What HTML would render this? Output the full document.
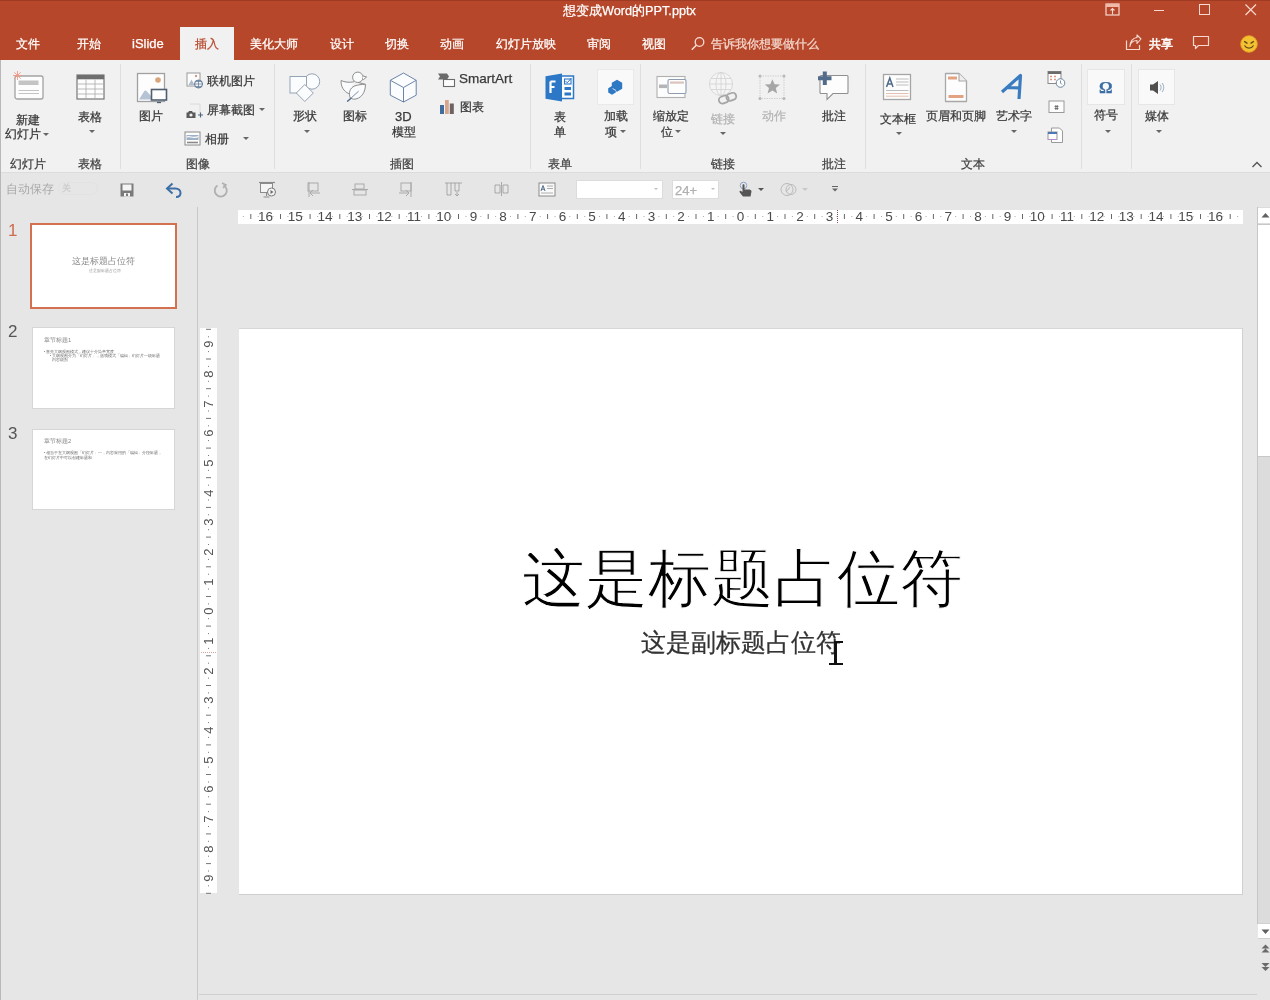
<!DOCTYPE html>
<html><head><meta charset="utf-8">
<style>
*{margin:0;padding:0;box-sizing:border-box}
html,body{width:1270px;height:1000px;overflow:hidden;background:#e6e6e6;font-family:"Liberation Sans",sans-serif;color:#3a3a3a}
body{will-change:transform}
.a{position:absolute}
.t{position:absolute;white-space:nowrap;font-size:12px;line-height:12px;-webkit-text-stroke:0.25px currentColor}
.w{color:#fff}
.dd{position:absolute;width:0;height:0;border-left:3px solid transparent;border-right:3px solid transparent;border-top:3px solid #666}
.sep{position:absolute;top:64px;width:1px;height:105px;background:#dedede}
.gl{position:absolute;white-space:nowrap;font-size:12px;line-height:12px;top:158px;color:#444;-webkit-text-stroke:0.25px currentColor}
svg{position:absolute;overflow:visible}
.rn{position:absolute;top:209.5px;width:30px;text-align:center;font-size:13.5px;line-height:14px;color:#4a4a4a}
.vn{position:absolute;left:194px;width:30px;height:14px;text-align:center;font-size:13px;line-height:14px;color:#555;transform:rotate(-90deg)}
</style></head><body>
<!-- title bar + tabs -->
<div class="a" style="left:0;top:0;width:1270px;height:60px;background:#b7472a"></div>
<div class="t w" style="left:563px;top:5px;font-size:12.7px;line-height:13px">想变成Word的PPT.pptx</div>
<!-- selected tab -->
<div class="a" style="left:180px;top:27px;width:54px;height:34px;background:#f1f1f1"></div>
<div class="t w" style="left:16px;top:38px">文件</div>
<div class="t w" style="left:77px;top:38px">开始</div>
<div class="t w" style="left:132px;top:37px;font-size:13px;line-height:13px">iSlide</div>
<div class="t" style="left:195px;top:38px;color:#b7472a">插入</div>
<div class="t w" style="left:250px;top:38px">美化大师</div>
<div class="t w" style="left:330px;top:38px">设计</div>
<div class="t w" style="left:385px;top:38px">切换</div>
<div class="t w" style="left:440px;top:38px">动画</div>
<div class="t w" style="left:496px;top:38px">幻灯片放映</div>
<div class="t w" style="left:587px;top:38px">审阅</div>
<div class="t w" style="left:642px;top:38px">视图</div>
<div class="t" style="left:711px;top:38px;color:#f3d6cd">告诉我你想要做什么</div>
<div class="t w" style="left:1149px;top:38px;-webkit-text-stroke:0.5px #fff">共享</div>


<!-- titlebar icons -->
<div class="a" style="left:0;top:0;width:1270px;height:1px;background:#9e3b22"></div>
<svg style="left:1105px;top:3px" width="16" height="13" viewBox="0 0 16 13">
 <rect x="1" y="1" width="13" height="11" fill="none" stroke="#f7d9cf" stroke-width="1.2"/>
 <rect x="1" y="1" width="13" height="3" fill="#f1b9a6"/>
 <path d="M7.5 11.5V5.5M5.5 7.5l2-2 2 2" fill="none" stroke="#f7d9cf" stroke-width="1.1"/>
</svg>
<div class="a" style="left:1154px;top:10px;width:10px;height:1px;background:#f7d9cf"></div>
<div class="a" style="left:1199px;top:4px;width:11px;height:11px;border:1.2px solid #f7d9cf"></div>
<svg style="left:1244px;top:3px" width="13" height="13" viewBox="0 0 13 13"><path d="M1.5 1.5l10.5 10.5M12 1.5L1.5 12" stroke="#f7d9cf" stroke-width="1.2"/></svg>
<!-- search -->
<svg style="left:690px;top:36px" width="16" height="16" viewBox="0 0 16 16"><circle cx="9.5" cy="6" r="4.3" fill="none" stroke="#f7ded6" stroke-width="1.3"/><path d="M6.5 9L1.8 13.8" stroke="#f7ded6" stroke-width="1.5"/></svg>
<!-- share -->
<svg style="left:1125px;top:34px" width="18" height="17" viewBox="0 0 18 17">
 <path d="M1.5 6.5V15.5H14.5V11" fill="none" stroke="#f7d9cf" stroke-width="1.2"/>
 <path d="M5 12.5C5.5 8.5 8.5 6.5 12 6.5V9.5L16 5L12 1V3.5C7.5 3.8 5 8 5 12.5Z" fill="none" stroke="#f7d9cf" stroke-width="1.1" stroke-linejoin="round"/>
</svg>
<!-- comment -->
<svg style="left:1192px;top:35px" width="18" height="15" viewBox="0 0 18 15">
 <path d="M1.5 1.5H16.5V10.5H6.5L3.5 13.5V10.5H1.5Z" fill="none" stroke="#f7d9cf" stroke-width="1.2" stroke-linejoin="round"/>
</svg>
<!-- smiley -->
<svg style="left:1240px;top:35px" width="18" height="18" viewBox="0 0 18 18">
 <circle cx="9" cy="9" r="8.3" fill="#f3c233" stroke="#e7a52a" stroke-width="0.8"/>
 <path d="M4.6 6.6L7 8.2M13.4 6.6L11 8.2" stroke="#6b4a1a" stroke-width="1.4" stroke-linecap="round"/>
 <path d="M4.8 10.8C6.3 13.8 11.7 13.8 13.2 10.8" fill="none" stroke="#6b4a1a" stroke-width="1.2" stroke-linecap="round"/>
</svg>

<!-- ribbon -->
<div class="a" style="left:0;top:60px;width:1270px;height:112px;background:#f1f1f1"></div>
<!-- QAT row -->
<div class="a" style="left:0;top:172px;width:1270px;height:34px;background:#e6e6e6;border-top:1px solid #dcdcdc"></div>

<!-- QAT -->
<div class="t" style="left:6px;top:183px;color:#aaaaaa;-webkit-text-stroke:0">自动保存</div>
<div class="a" style="left:58px;top:182px;width:40px;height:13px;border:1px solid #e2e2e2;border-radius:7px"></div>
<div class="t" style="left:62px;top:184px;font-size:9px;line-height:9px;color:#cccccc">关</div>
<svg style="left:119px;top:182px" width="16" height="16" viewBox="0 0 16 16">
 <path d="M1.5 1.5H14.5V14.5H1.5Z" fill="#7a7a7a"/>
 <rect x="3.5" y="2.5" width="9" height="6" fill="#f4f4f4"/>
 <rect x="5" y="11" width="6" height="3.5" fill="#f4f4f4"/>
 <rect x="7" y="11.5" width="2" height="2.5" fill="#7a7a7a"/>
</svg>
<svg style="left:165px;top:182px" width="18" height="16" viewBox="0 0 18 16">
 <path d="M3 6.5H10.5C13.5 6.5 15.5 8.5 15.5 11C15.5 13.5 13.5 15 11 15" fill="none" stroke="#3d6fa6" stroke-width="2"/>
 <path d="M7.5 1.5L2 6.5L7.5 11.5" fill="none" stroke="#3d6fa6" stroke-width="2"/>
</svg>
<svg style="left:213px;top:182px" width="16" height="16" viewBox="0 0 16 16">
 <path d="M10.5 3.2A6 6 0 1 1 4.5 3.5" fill="none" stroke="#b0b0b0" stroke-width="1.8"/>
 <path d="M9 1L13 3L10 6" fill="none" stroke="#b0b0b0" stroke-width="1.5"/>
</svg>
<svg style="left:258px;top:181px" width="19" height="18" viewBox="0 0 19 18">
 <path d="M1 1.5H17" stroke="#8a8a8a" stroke-width="1.2"/>
 <rect x="2.5" y="2.5" width="12" height="9" fill="#f4f4f4" stroke="#8a8a8a" stroke-width="1"/>
 <path d="M8.5 11.5V15M5.5 16H11.5" stroke="#8a8a8a" stroke-width="1"/>
 <circle cx="13.5" cy="11" r="4" fill="#f4f4f4" stroke="#7a7a7a" stroke-width="1"/>
 <path d="M12.5 9V13L15.5 11Z" fill="#6a6a6a"/>
</svg>
<svg style="left:306px;top:181px" width="16" height="17" viewBox="0 0 16 17" opacity="0.8">
 <rect x="2" y="2" width="10" height="8" fill="none" stroke="#9a9a9a"/>
 <path d="M14 12H4M7 9L4 12L7 15M3 1V16" fill="none" stroke="#9a9a9a"/>
</svg>
<svg style="left:352px;top:182px" width="16" height="15" viewBox="0 0 16 15" opacity="0.8">
 <rect x="3" y="2" width="9" height="5" fill="none" stroke="#9a9a9a"/>
 <rect x="2" y="8" width="12" height="5" fill="none" stroke="#9a9a9a"/>
 <path d="M0 7.5H16" stroke="#9a9a9a"/>
</svg>
<svg style="left:398px;top:181px" width="16" height="17" viewBox="0 0 16 17" opacity="0.8">
 <rect x="3" y="2" width="10" height="8" fill="none" stroke="#9a9a9a"/>
 <path d="M1 12H11M8 9L11 12L8 15M13 1V16" fill="none" stroke="#9a9a9a"/>
</svg>
<svg style="left:444px;top:181px" width="19" height="16" viewBox="0 0 19 16" opacity="0.8">
 <path d="M1 2H18M3 2V14H7V2M11 2V10H15V2M13 11V15M11 13L13 15L15 13" fill="none" stroke="#9a9a9a"/>
</svg>
<svg style="left:493px;top:181px" width="17" height="16" viewBox="0 0 17 16" opacity="0.8">
 <path d="M8.5 1V15M2 4H7V12H2ZM10 4H15V12H10Z" fill="none" stroke="#9a9a9a"/>
</svg>
<svg style="left:538px;top:182px" width="18" height="15" viewBox="0 0 18 15">
 <rect x="1" y="1" width="16" height="13" fill="#fafafa" stroke="#8a8a8a" stroke-width="1"/>
 <path d="M3 9L5 3.5L7 9M3.8 7.2H6.2" fill="none" stroke="#4f6a8a" stroke-width="1"/>
 <path d="M9 4H15M9 6.5H15M3 11H15" stroke="#9a9a9a" stroke-width="0.8"/>
</svg>
<div class="a" style="left:576px;top:180px;width:87px;height:19px;background:#fff;border:1px solid #dcdcdc"></div>
<div class="dd" style="left:654px;top:188px;border-top-color:#c0c0c0;border-left-width:2.5px;border-right-width:2.5px;border-top-width:2.5px"></div>
<div class="a" style="left:672px;top:180px;width:47px;height:19px;background:#fff;border:1px solid #dcdcdc"></div>
<div class="t" style="left:675px;top:184px;font-size:13px;line-height:13px;color:#b0b0b0">24+</div>
<div class="dd" style="left:711px;top:188px;border-top-color:#c0c0c0;border-left-width:2.5px;border-right-width:2.5px;border-top-width:2.5px"></div>
<svg style="left:738px;top:181px" width="15" height="17" viewBox="0 0 15 17">
 <circle cx="5.5" cy="4.5" r="3.3" fill="none" stroke="#8ca6c6" stroke-width="1"/>
 <path d="M4.5 4V11L3 10C2 9.5 1 10.5 1.8 11.5L5 15.5H12.5L13.5 10.5C13.5 9 12 8.5 10.5 8.5H6.5V4C6.5 3 4.5 3 4.5 4Z" fill="#555"/>
</svg>
<div class="dd" style="left:758px;top:188px;border-top-color:#555"></div>
<svg style="left:780px;top:181px" width="20" height="17" viewBox="0 0 20 17" opacity="0.6">
 <circle cx="7" cy="8.5" r="6" fill="none" stroke="#9a9a9a"/>
 <circle cx="11" cy="8.5" r="5" fill="none" stroke="#9a9a9a"/>
 <path d="M6 11L10 6" stroke="#9a9a9a"/>
</svg>
<div class="dd" style="left:802px;top:188px;border-top-color:#c8c8c8"></div>
<svg style="left:831px;top:185px" width="8" height="8" viewBox="0 0 8 8"><path d="M1 1.5H7" stroke="#666" stroke-width="1"/><path d="M1 3.5H7L4 6.5Z" fill="#666"/></svg>

<!-- left border -->
<div class="a" style="left:0;top:60px;width:1px;height:940px;background:#b8b8b8"></div>
<!-- thumbnail pane separator -->
<div class="a" style="left:197px;top:207px;width:1px;height:793px;background:#c8c8c8"></div>


<!-- thumbnails -->
<div class="t" style="left:8px;top:222px;font-size:17px;line-height:17px;color:#cf6a50;-webkit-text-stroke:0">1</div>
<div class="a" style="left:30px;top:223px;width:147px;height:86px;border:2px solid #d2704f;background:#fff"></div>
<div class="t" style="left:72px;top:257px;font-size:8.8px;line-height:9px;color:#8a8a8a;-webkit-text-stroke:0">这是标题占位符</div>
<div class="t" style="left:89px;top:268.5px;font-size:4px;line-height:4px;color:#999;-webkit-text-stroke:0">这是副标题占位符</div>
<div class="t" style="left:8px;top:323px;font-size:17px;line-height:17px;color:#555;-webkit-text-stroke:0">2</div>
<div class="a" style="left:32px;top:327px;width:143px;height:82px;border:1px solid #d6d6d6;background:#fff"></div>
<div class="t" style="left:44px;top:337px;font-size:6px;line-height:6px;color:#8a8a8a;-webkit-text-stroke:0">章节标题1</div>
<div class="t" style="left:44px;top:350px;font-size:3.6px;line-height:4px;color:#6a6a6a;-webkit-text-stroke:0">• 首先大纲视图模式，建议十分简单宽度</div>
<div class="t" style="left:50px;top:354px;font-size:3.6px;line-height:4px;color:#6a6a6a;-webkit-text-stroke:0">• 大纲视图分为「幻灯片」，选项模式「编辑」幻灯片一级标题</div>
<div class="t" style="left:52px;top:358px;font-size:3.6px;line-height:4px;color:#6a6a6a;-webkit-text-stroke:0">内容级别</div>
<div class="t" style="left:8px;top:425px;font-size:17px;line-height:17px;color:#555;-webkit-text-stroke:0">3</div>
<div class="a" style="left:32px;top:429px;width:143px;height:81px;border:1px solid #d6d6d6;background:#fff"></div>
<div class="t" style="left:44px;top:438px;font-size:6px;line-height:6px;color:#8a8a8a;-webkit-text-stroke:0">章节标题2</div>
<div class="t" style="left:44px;top:451px;font-size:3.6px;line-height:4px;color:#6a6a6a;-webkit-text-stroke:0">• 相当于在大纲视图「幻灯片」一，内容采用的「编辑」分段标题，</div>
<div class="t" style="left:44px;top:456px;font-size:3.6px;line-height:4px;color:#6a6a6a;-webkit-text-stroke:0">在幻灯片中可以创建标题和</div>

<!-- horizontal ruler -->
<div class="a" style="left:238px;top:210px;width:1005px;height:14px;background:#fff"></div>
<!-- vertical ruler -->
<div class="a" style="left:200px;top:328px;width:17px;height:565px;background:#fff"></div>
<!-- rulers -->
<div class="rn" style="left:250.6px">16</div>
<div class="rn" style="left:280.3px">15</div>
<div class="rn" style="left:310.0px">14</div>
<div class="rn" style="left:339.7px">13</div>
<div class="rn" style="left:369.3px">12</div>
<div class="rn" style="left:399.0px">11</div>
<div class="rn" style="left:428.7px">10</div>
<div class="rn" style="left:458.4px">9</div>
<div class="rn" style="left:488.1px">8</div>
<div class="rn" style="left:517.7px">7</div>
<div class="rn" style="left:547.4px">6</div>
<div class="rn" style="left:577.1px">5</div>
<div class="rn" style="left:606.8px">4</div>
<div class="rn" style="left:636.5px">3</div>
<div class="rn" style="left:666.1px">2</div>
<div class="rn" style="left:695.8px">1</div>
<div class="rn" style="left:725.5px">0</div>
<div class="rn" style="left:755.2px">1</div>
<div class="rn" style="left:784.9px">2</div>
<div class="rn" style="left:814.5px">3</div>
<div class="rn" style="left:844.2px">4</div>
<div class="rn" style="left:873.9px">5</div>
<div class="rn" style="left:903.6px">6</div>
<div class="rn" style="left:933.3px">7</div>
<div class="rn" style="left:962.9px">8</div>
<div class="rn" style="left:992.6px">9</div>
<div class="rn" style="left:1022.3px">10</div>
<div class="rn" style="left:1052.0px">11</div>
<div class="rn" style="left:1081.7px">12</div>
<div class="rn" style="left:1111.3px">13</div>
<div class="rn" style="left:1141.0px">14</div>
<div class="rn" style="left:1170.7px">15</div>
<div class="rn" style="left:1200.4px">16</div>
<svg style="left:0;top:0" width="1270" height="1000"><path d="M250.8 214V219 M280.5 214V219 M310.1 214V219 M339.8 214V219 M369.5 214V219 M399.2 214V219 M428.9 214V219 M458.5 214V219 M488.2 214V219 M517.9 214V219 M547.6 214V219 M577.3 214V219 M606.9 214V219 M636.6 214V219 M666.3 214V219 M696.0 214V219 M725.7 214V219 M755.3 214V219 M785.0 214V219 M814.7 214V219 M844.4 214V219 M874.1 214V219 M903.7 214V219 M933.4 214V219 M963.1 214V219 M992.8 214V219 M1022.5 214V219 M1052.1 214V219 M1081.8 214V219 M1111.5 214V219 M1141.2 214V219 M1170.9 214V219 M1200.5 214V219 M1230.2 214V219" stroke="#666" stroke-width="1" fill="none"/><path d="M243.4 216V217 M258.2 216V217 M273.0 216V217 M287.9 216V217 M302.7 216V217 M317.6 216V217 M332.4 216V217 M347.2 216V217 M362.1 216V217 M376.9 216V217 M391.8 216V217 M406.6 216V217 M421.4 216V217 M436.3 216V217 M451.1 216V217 M466.0 216V217 M480.8 216V217 M495.6 216V217 M510.5 216V217 M525.3 216V217 M540.2 216V217 M555.0 216V217 M569.8 216V217 M584.7 216V217 M599.5 216V217 M614.4 216V217 M629.2 216V217 M644.0 216V217 M658.9 216V217 M673.7 216V217 M688.6 216V217 M703.4 216V217 M718.2 216V217 M733.1 216V217 M747.9 216V217 M762.8 216V217 M777.6 216V217 M792.4 216V217 M807.3 216V217 M822.1 216V217 M837.0 216V217 M851.8 216V217 M866.6 216V217 M881.5 216V217 M896.3 216V217 M911.2 216V217 M926.0 216V217 M940.8 216V217 M955.7 216V217 M970.5 216V217 M985.4 216V217 M1000.2 216V217 M1015.0 216V217 M1029.9 216V217 M1044.7 216V217 M1059.6 216V217 M1074.4 216V217 M1089.2 216V217 M1104.1 216V217 M1118.9 216V217 M1133.8 216V217 M1148.6 216V217 M1163.4 216V217 M1178.3 216V217 M1193.1 216V217 M1208.0 216V217 M1222.8 216V217 M1237.6 216V217" stroke="#aaa" stroke-width="1" fill="none"/>
<path d="M206 329.3H211 M206 359.0H211 M206 388.7H211 M206 418.4H211 M206 448.1H211 M206 477.7H211 M206 507.4H211 M206 537.1H211 M206 566.8H211 M206 596.5H211 M206 626.1H211 M206 655.8H211 M206 685.5H211 M206 715.2H211 M206 744.9H211 M206 774.5H211 M206 804.2H211 M206 833.9H211 M206 863.6H211 M206 893.3H211 M208 336.8H209 M208 351.6H209 M208 366.4H209 M208 381.3H209 M208 396.1H209 M208 411.0H209 M208 425.8H209 M208 440.6H209 M208 455.5H209 M208 470.3H209 M208 485.2H209 M208 500.0H209 M208 514.8H209 M208 529.7H209 M208 544.5H209 M208 559.4H209 M208 574.2H209 M208 589.0H209 M208 603.9H209 M208 618.7H209 M208 633.6H209 M208 648.4H209 M208 663.2H209 M208 678.1H209 M208 692.9H209 M208 707.8H209 M208 722.6H209 M208 737.4H209 M208 752.3H209 M208 767.1H209 M208 782.0H209 M208 796.8H209 M208 811.6H209 M208 826.5H209 M208 841.3H209 M208 856.2H209 M208 871.0H209 M208 885.8H209" stroke="#777" stroke-width="1" fill="none"/></svg>
<div class="vn" style="top:337.2px">9</div>
<div class="vn" style="top:366.9px">8</div>
<div class="vn" style="top:396.5px">7</div>
<div class="vn" style="top:426.2px">6</div>
<div class="vn" style="top:455.9px">5</div>
<div class="vn" style="top:485.6px">4</div>
<div class="vn" style="top:515.3px">3</div>
<div class="vn" style="top:544.9px">2</div>
<div class="vn" style="top:574.6px">1</div>
<div class="vn" style="top:604.3px">0</div>
<div class="vn" style="top:634.0px">1</div>
<div class="vn" style="top:663.7px">2</div>
<div class="vn" style="top:693.3px">3</div>
<div class="vn" style="top:723.0px">4</div>
<div class="vn" style="top:752.7px">5</div>
<div class="vn" style="top:782.4px">6</div>
<div class="vn" style="top:812.1px">7</div>
<div class="vn" style="top:841.7px">8</div>
<div class="vn" style="top:871.4px">9</div>
<div class="a" style="left:837px;top:210px;width:1px;height:14px;background:repeating-linear-gradient(#7a5050 0 1px,transparent 1px 2px)"></div>
<div class="a" style="left:201px;top:652px;width:15px;height:1px;background:repeating-linear-gradient(90deg,#d9a0a0 0 1px,transparent 1px 2px)"></div>
<!-- slide -->
<div class="a" style="left:239px;top:328px;width:1004px;height:567px;background:#fff;border-top:1px solid #d6d6d6;border-right:1px solid #d0d0d0;border-bottom:1px solid #cfcfcf"></div>

<!-- scrollbar -->
<div class="a" style="left:1257px;top:207px;width:13px;height:717px;background:#dcdcdc;border-left:1px solid #c6c6c6"></div>
<div class="a" style="left:1258px;top:208px;width:12px;height:15px;background:#fff"></div>
<svg style="left:1261px;top:212px" width="9" height="6" viewBox="0 0 9 6"><path d="M0.5 5.5L4.5 1L8.5 5.5Z" fill="#606060"/></svg>
<div class="a" style="left:1258px;top:224px;width:12px;height:233px;background:#fff;border-top:1px solid #c8c8c8;border-bottom:1px solid #c8c8c8"></div>
<div class="a" style="left:1258px;top:923px;width:12px;height:16px;background:#fff;border-top:1px solid #d0d0d0;border-bottom:1px solid #d0d0d0"></div>
<svg style="left:1261px;top:929px" width="9" height="6" viewBox="0 0 9 6"><path d="M0.5 0.5L4.5 5L8.5 0.5Z" fill="#606060"/></svg>
<svg style="left:1261px;top:944px" width="9" height="28" viewBox="0 0 9 28">
 <path d="M0.5 4.5L4.5 0.5L8.5 4.5Z M0.5 8.5L4.5 4.5L8.5 8.5Z" fill="#6a6a6a"/>
 <path d="M0.5 19L4.5 23L8.5 19Z M0.5 23L4.5 27L8.5 23Z" fill="#6a6a6a"/>
</svg>
<!-- bottom line -->
<div class="a" style="left:199px;top:994px;width:1058px;height:1px;background:#d0d0d0"></div>

<!-- ribbon icons -->
<!-- new slide -->
<svg style="left:13px;top:70px" width="32" height="31" viewBox="0 0 32 31">
 <rect x="2" y="6" width="28" height="23" rx="2" fill="#fdfdfd" stroke="#a2a2a2" stroke-width="1.3"/>
 <rect x="5.5" y="10.5" width="20" height="4.5" fill="#c4c4c4"/>
 <path d="M5.5 20.5H26M5.5 23.5H26" stroke="#bcbcbc" stroke-width="0.9"/>
 <path d="M4.5 1V10M0 5.5H9M1.3 2.3L7.7 8.7M7.7 2.3L1.3 8.7" stroke="#ee9a84" stroke-width="0.9"/>
</svg>
<!-- table -->
<svg style="left:76px;top:74px" width="29" height="26" viewBox="0 0 29 26">
 <rect x="1" y="1" width="27" height="24" fill="#fdfdfd" stroke="#777" stroke-width="1.2"/>
 <rect x="1" y="1" width="27" height="4.3" fill="#6e6e6e"/>
 <path d="M10 5.5V25M19 5.5V25M1 10H28M1 15H28M1 20H28" stroke="#aaaaaa" stroke-width="0.8"/>
</svg>
<!-- picture -->
<svg style="left:136px;top:72px" width="32" height="32" viewBox="0 0 32 32">
 <rect x="1.5" y="1.5" width="27" height="28" fill="#fdfdfd" stroke="#a0a0a0" stroke-width="1.3"/>
 <circle cx="22" cy="8" r="2.8" fill="#dba57c"/>
 <path d="M3 27.5L8 19.5C8.5 18.3 9.5 18 10.5 19L15 24V27.5Z" fill="#b6c3d5"/>
 <rect x="15.5" y="17.5" width="15" height="10.5" fill="#fdfdfd" stroke="#4f5f72" stroke-width="1.6"/>
 <path d="M21 30.5H25" stroke="#4d5d70" stroke-width="1.3"/>
</svg>
<!-- online picture -->
<svg style="left:186px;top:72px" width="18" height="17" viewBox="0 0 18 17">
 <rect x="1" y="1" width="13" height="13" fill="#fdfdfd" stroke="#9a9a9a" stroke-width="1"/>
 <circle cx="10" cy="4" r="1.2" fill="#c9a08a"/>
 <path d="M2.5 13L5.5 7.5L8.5 13Z" fill="#b0bccc"/>
 <circle cx="12.5" cy="12" r="4" fill="#f4f7fb" stroke="#5a7490" stroke-width="1"/>
 <path d="M8.5 12H16.5M12.5 8V16M9.5 9.5H15.5M9.5 14.5H15.5" stroke="#5a7490" stroke-width="0.7"/>
</svg>
<!-- screenshot -->
<svg style="left:185px;top:100px" width="20" height="20" viewBox="0 0 20 20">
 <path d="M5 4H15V14" fill="none" stroke="#d5d5d5" stroke-width="0.8"/>
 <path d="M1.5 12.5H3L4 11H7L8 12.5H10.5V18H1.5Z" fill="#5a5a5a"/>
 <circle cx="6" cy="15" r="1.6" fill="#f1f1f1"/>
 <path d="M13 15H18M15.5 12.5V17.5" stroke="#4d6580" stroke-width="1.1"/>
</svg>
<!-- photo album -->
<svg style="left:184px;top:131px" width="17" height="15" viewBox="0 0 17 15">
 <rect x="1" y="1" width="15" height="13" fill="#fdfdfd" stroke="#8a8a8a" stroke-width="1"/>
 <path d="M2.5 4H14.5V9H2.5Z" fill="#9fb1c6"/>
 <path d="M2.5 6C6 4.5 9 8 14.5 5.5" stroke="#fdfdfd" stroke-width="1.1" fill="none"/>
 <path d="M3 11.5H14" stroke="#8a8a8a" stroke-width="1.6"/>
</svg>
<!-- shapes -->
<svg style="left:288px;top:72px" width="34" height="32" viewBox="0 0 34 32">
 <circle cx="24" cy="9.5" r="7.7" fill="#fbfcfd" stroke="#96a3b5" stroke-width="1"/>
 <rect x="2" y="4.5" width="16.5" height="16.5" fill="#fbfcfd" stroke="#96a3b5" stroke-width="1"/>
 <path d="M16.8 12.5L25.3 21L16.8 29.5L8.3 21Z" fill="#fbfcfd" stroke="#96a3b5" stroke-width="1"/>
</svg>
<!-- icons (duck/leaf) -->
<svg style="left:338px;top:71px" width="32" height="33" viewBox="0 0 32 33">
 <path d="M16 10.8C11.5 11.8 6.5 11.2 3.1 9.5C2.8 15.5 5.5 20.5 11.3 22.8" fill="#fafbfc" stroke="#8c8c8c" stroke-width="1"/>
 <circle cx="19.8" cy="6.3" r="5.2" fill="#fafbfc" stroke="#8c8c8c" stroke-width="1"/>
 <path d="M24.6 4.8L28.6 6L25.2 8.8" fill="#fafbfc" stroke="#8c8c8c" stroke-width="1" stroke-linejoin="round"/>
 <path d="M20.5 11.5C23 12.3 25.2 12.8 27.4 13.3" fill="none" stroke="#8c8c8c" stroke-width="1"/>
 <path d="M12.2 27C10.5 22 11.5 17 16.8 14.9C20 13.8 24 13.3 27.4 13.3C27.8 21 23 28.5 15.3 28.2Z" fill="#fafbfc" stroke="#8c8c8c" stroke-width="1"/>
 <path d="M9.3 30.5L20.6 20.2" stroke="#7a8ea8" stroke-width="1"/>
 <path d="M9.3 30.5L13 27.2" stroke="#4f6a8c" stroke-width="1.4"/>
</svg>
<!-- 3D cube -->
<svg style="left:388px;top:71px" width="30" height="33" viewBox="0 0 30 33">
 <path d="M15.5 2L28.2 9.3V24.2L15.5 31L2.3 24.2V9.3Z" fill="#fbfcfd" stroke="#6a84a8" stroke-width="1" stroke-linejoin="round"/>
 <path d="M2.3 9.3L15.5 16.5L28.2 9.3M15.5 16.5V31" fill="none" stroke="#6a84a8" stroke-width="1"/>
</svg>
<!-- smartart -->
<svg style="left:437px;top:72px" width="20" height="16" viewBox="0 0 20 16">
 <path d="M1 1.5H10L12 4.5L10 7.5H1L3 4.5Z" fill="#6b6b6b"/>
 <rect x="6.5" y="7.5" width="11" height="7" fill="#fdfdfd" stroke="#6b6b6b" stroke-width="1.1"/>
</svg>
<!-- chart -->
<svg style="left:439px;top:99px" width="16" height="16" viewBox="0 0 16 16">
 <rect x="1" y="6" width="4" height="9" fill="#3f6d9e"/>
 <rect x="6" y="1" width="3.8" height="14" fill="#d6a58a"/>
 <rect x="10.8" y="4.5" width="4" height="10.5" fill="#6e6264"/>
</svg>
<!-- forms -->
<svg style="left:544px;top:72px" width="31" height="31" viewBox="0 0 31 31">
 <path d="M1.5 4.3L18 1.5V29.5L1.5 26.7Z" fill="#2d78c6"/>
 <path d="M18 4H29.5V26.5H18" fill="#fdfdfd" stroke="#2d78c6" stroke-width="1.5"/>
 <path d="M6.5 9.5H11.5M6.5 9.5V21M6.5 15H10.5" stroke="#fff" stroke-width="2.2"/>
 <rect x="20.5" y="7" width="6.5" height="5" fill="none" stroke="#2d78c6" stroke-width="1.1"/>
 <path d="M21.5 9L23.2 10.8L27.5 6" stroke="#2d78c6" stroke-width="1" fill="none"/>
 <rect x="20.5" y="15" width="6.5" height="3" fill="#2d78c6"/>
 <rect x="20.5" y="20.5" width="6.5" height="3" fill="#2d78c6"/>
</svg>
<!-- add-ins -->
<div class="a" style="left:597px;top:69px;width:37px;height:36px;background:#f9f9f9;border:1px solid #e9e9e9"></div>
<svg style="left:606px;top:78px" width="20" height="18" viewBox="0 0 20 18">
 <path d="M11 1.8L16.2 4.8V10.8L11 13.8L5.8 10.8V4.8Z" fill="#2f78c4"/>
 <path d="M6 8L9.8 10.2V14.6L6 16.8L2.2 14.6V10.2Z" fill="#2f78c4"/>
 <path d="M6.5 10.5L10 12.5" stroke="#f7f9fc" stroke-width="0.8"/>
</svg>
<!-- zoom -->
<svg style="left:655px;top:74px" width="33" height="26" viewBox="0 0 33 26">
 <rect x="2" y="2.5" width="28" height="21" fill="#fdfdfd" stroke="#b0b0b0" stroke-width="1.1"/>
 <rect x="13" y="5.5" width="18" height="14" rx="1.5" fill="#fdfdfd" stroke="#8e9cb0" stroke-width="1.1"/>
 <rect x="15" y="7.5" width="14" height="2.2" fill="#dcc4be"/>
 <rect x="4" y="10.5" width="8" height="3.6" fill="#b5b5b5"/>
</svg>
<!-- link (disabled) -->
<svg style="left:706px;top:71px" width="34" height="33" viewBox="0 0 34 33">
 <circle cx="15" cy="13" r="11.5" fill="#f5f5f5" stroke="#d8d8d8" stroke-width="1"/>
 <ellipse cx="15" cy="13" rx="5" ry="11.5" fill="none" stroke="#d0d0d0" stroke-width="0.8"/>
 <path d="M3.5 13H26.5M5 7.5H25M5 18.5H25M15 1.5V24.5" stroke="#d0d0d0" stroke-width="0.8"/>
 <g transform="rotate(-20 22 27)"><rect x="12.5" y="23.5" width="10" height="7" rx="3.5" fill="none" stroke="#a5a5a5" stroke-width="1.8"/>
 <rect x="20.5" y="23.5" width="10" height="7" rx="3.5" fill="none" stroke="#a5a5a5" stroke-width="1.8"/></g>
</svg>
<!-- action (disabled) -->
<svg style="left:757px;top:73px" width="30" height="28" viewBox="0 0 30 28">
 <rect x="3" y="3" width="24" height="22.5" fill="none" stroke="#c8c8c8" stroke-width="0.8" stroke-dasharray="1.5 1"/>
 <circle cx="3" cy="3" r="1.5" fill="#b8b8b8"/><circle cx="27" cy="3" r="1.5" fill="#b8b8b8"/>
 <circle cx="3" cy="25.5" r="1.5" fill="#b8b8b8"/><circle cx="27" cy="25.5" r="1.5" fill="#b8b8b8"/>
 <path d="M15.4 6.2L17.5 11.3L23 11.6L18.8 15.1L20.2 20.5L15.4 17.5L10.6 20.5L12 15.1L7.8 11.6L13.3 11.3Z" fill="#a6a6a6"/>
</svg>
<!-- new comment -->
<svg style="left:816px;top:70px" width="34" height="32" viewBox="0 0 34 32">
 <path d="M5 5.5H31C31.8 5.5 32 5.8 32 6.5V22.5C32 23.3 31.8 23.5 31 23.5H17L11 29.5V23.5H5C4.2 23.5 4 23.2 4 22.5V6.5C4 5.8 4.2 5.5 5 5.5Z" fill="#fdfdfd" stroke="#8f8f8f" stroke-width="1.1"/>
 <path d="M8.8 1.5V15M2 8.2H15.5" stroke="#506c8a" stroke-width="4"/>
</svg>
<!-- text box -->
<svg style="left:882px;top:73px" width="30" height="28" viewBox="0 0 30 28">
 <rect x="1.5" y="1.5" width="27" height="25" fill="#fdfdfd" stroke="#a5a5a5" stroke-width="1.3"/>
 <path d="M4.5 14L7.8 5L11 14M5.7 11H9.9" fill="none" stroke="#4f6a8a" stroke-width="1.5"/>
 <path d="M14 6H26.5M14 9H26.5M14 12H26.5M4 17.5H26.5" stroke="#b5b5b5" stroke-width="0.9"/>
 <path d="M4 20.5H26.5M4 23.2H26.5" stroke="#e2b8a6" stroke-width="0.9"/>
</svg>
<!-- header footer -->
<svg style="left:944px;top:72px" width="24" height="31" viewBox="0 0 24 31">
 <path d="M1.5 1.5H15L22.5 9V29.5H1.5Z" fill="#fdfdfd" stroke="#a8a8a8" stroke-width="1.3" stroke-linejoin="round"/>
 <path d="M15 1.5V9H22.5" fill="#eeeeee" stroke="#a8a8a8" stroke-width="1.1"/>
 <rect x="4" y="4.5" width="9" height="3" fill="#e3a383"/>
 <rect x="4.5" y="23" width="15" height="3" fill="#e3a383"/>
</svg>
<!-- wordart -->
<svg style="left:999px;top:72px" width="26" height="30" viewBox="0 0 26 30">
 <path d="M3 20L21.5 3.5L20 27M8.5 15.5L20.5 16" fill="none" stroke="#3b7cc0" stroke-width="3.2" stroke-linejoin="round"/>
</svg>
<!-- date time -->
<svg style="left:1046px;top:70px" width="20" height="19" viewBox="0 0 20 19">
 <rect x="2" y="1.5" width="13" height="12" fill="#fdfdfd" stroke="#8a8a8a" stroke-width="1"/>
 <rect x="2" y="1.5" width="13" height="2.5" fill="#6b6b6b"/>
 <path d="M4 6.5H6M8 6.5H10M4 9.5H6M8 9.5H10" stroke="#d99a86" stroke-width="1.5"/>
 <circle cx="14.5" cy="13" r="4.3" fill="#fdfdfd" stroke="#6b86a5" stroke-width="1"/>
 <path d="M14.5 10.5V13L16 14.5" stroke="#6b86a5" stroke-width="0.9" fill="none"/>
</svg>
<!-- slide number -->
<svg style="left:1048px;top:100px" width="17" height="14" viewBox="0 0 17 14">
 <rect x="1" y="1" width="15" height="11.5" fill="#fdfdfd" stroke="#9a9a9a" stroke-width="1"/>
 <path d="M6.5 6.5H10.5M6.5 8.5H10.5M7.8 5V10M9.3 5V10" stroke="#555" stroke-width="0.7"/>
</svg>
<!-- object -->
<svg style="left:1046px;top:127px" width="19" height="17" viewBox="0 0 19 17">
 <path d="M5.5 1H13.5L16.5 4V15.5H5.5Z" fill="#fdfdfd" stroke="#9a9a9a" stroke-width="1"/>
 <rect x="2" y="5" width="9" height="7.5" fill="#fdfdfd" stroke="#8a8a8a" stroke-width="0.9"/>
 <rect x="2" y="5" width="9" height="2" fill="#4b79b5"/>
 <path d="M2 12.5H11" stroke="#b48acb" stroke-width="1"/>
</svg>
<!-- symbol -->
<div class="a" style="left:1087px;top:69px;width:38px;height:36px;background:#f9f9f9;border:1px solid #e6e6e6"></div>
<div class="t" style="left:1099px;top:79px;font-family:'Liberation Serif',serif;font-size:17px;line-height:17px;font-weight:bold;color:#3b6ea5">Ω</div>
<!-- media -->
<div class="a" style="left:1138px;top:69px;width:37px;height:36px;background:#f9f9f9;border:1px solid #e6e6e6"></div>
<svg style="left:1149px;top:80px" width="16" height="15" viewBox="0 0 16 15">
 <path d="M1 4.5H4L9 1V14L4 10.5H1Z" fill="#4f4f4f"/>
 <path d="M11 4.5C12.5 6 12.5 9 11 10.5M13 3C15.3 5.5 15.3 9.5 13 12" fill="none" stroke="#8fa3bb" stroke-width="0.9"/>
</svg>
<!-- collapse -->
<svg style="left:1251px;top:160px" width="12" height="9" viewBox="0 0 12 9"><path d="M1.5 7L6 2.5L10.5 7" fill="none" stroke="#555" stroke-width="1.4"/></svg>

<!-- ribbon labels -->
<div class="t" style="left:16px;top:114px">新建</div>
<div class="t" style="left:5px;top:128px">幻灯片</div>
<div class="t" style="left:78px;top:111px">表格</div>
<div class="t" style="left:139px;top:110px">图片</div>
<div class="t" style="left:207px;top:75px">联机图片</div>
<div class="t" style="left:207px;top:104px">屏幕截图</div>
<div class="t" style="left:205px;top:133px">相册</div>
<div class="t" style="left:293px;top:110px">形状</div>
<div class="t" style="left:343px;top:110px">图标</div>
<div class="t" style="left:392px;top:126px">模型</div>
<div class="t" style="left:460px;top:101px">图表</div>
<div class="t" style="left:554px;top:111px">表</div>
<div class="t" style="left:554px;top:126px">单</div>
<div class="t" style="left:604px;top:110px">加载</div>
<div class="t" style="left:605px;top:126px">项</div>
<div class="t" style="left:653px;top:110px">缩放定</div>
<div class="t" style="left:661px;top:126px">位</div>
<div class="t" style="left:822px;top:110px">批注</div>
<div class="t" style="left:880px;top:113px">文本框</div>
<div class="t" style="left:926px;top:110px">页眉和页脚</div>
<div class="t" style="left:996px;top:110px">艺术字</div>
<div class="t" style="left:1094px;top:109px">符号</div>
<div class="t" style="left:1145px;top:110px">媒体</div>
<div class="t" style="left:395px;top:110px;font-size:13px;line-height:13px">3D</div>
<div class="t" style="left:459px;top:72px;font-size:13.5px;line-height:13.5px">SmartArt</div>
<div class="t" style="left:711px;top:113px;color:#b4b4b4">链接</div>
<div class="t" style="left:762px;top:110px;color:#b4b4b4">动作</div>
<div class="gl" style="left:10px">幻灯片</div>
<div class="gl" style="left:78px">表格</div>
<div class="gl" style="left:186px">图像</div>
<div class="gl" style="left:390px">插图</div>
<div class="gl" style="left:548px">表单</div>
<div class="gl" style="left:711px">链接</div>
<div class="gl" style="left:822px">批注</div>
<div class="gl" style="left:961px">文本</div>
<div class="dd" style="left:43px;top:133px"></div>
<div class="dd" style="left:89px;top:130px"></div>
<div class="dd" style="left:259px;top:108px"></div>
<div class="dd" style="left:243px;top:137px"></div>
<div class="dd" style="left:304px;top:130px"></div>
<div class="dd" style="left:620px;top:130px"></div>
<div class="dd" style="left:675px;top:130px"></div>
<div class="dd" style="left:720px;top:132px"></div>
<div class="dd" style="left:896px;top:132px"></div>
<div class="dd" style="left:1011px;top:130px"></div>
<div class="dd" style="left:1105px;top:130px"></div>
<div class="dd" style="left:1156px;top:130px"></div>
<div class="sep" style="left:120px"></div>
<div class="sep" style="left:274px"></div>
<div class="sep" style="left:530px"></div>
<div class="sep" style="left:640px"></div>
<div class="sep" style="left:865px"></div>
<div class="sep" style="left:1081px"></div>
<div class="sep" style="left:1131px"></div>
<!-- slide text -->
<div class="t" style="left:522px;top:547px;font-size:62.8px;line-height:62.8px;color:#000;-webkit-text-stroke:1.1px #fff">这是标题占位符</div>
<div class="t" style="left:641px;top:630px;font-size:25px;line-height:25px;color:#333">这是副标题占位符</div>


<!-- I-beam cursor -->
<div class="a" style="left:834px;top:641px;width:9px;height:2px;background:#111"></div>
<div class="a" style="left:834px;top:642px;width:3px;height:22px;background:#111"></div>
<div class="a" style="left:829px;top:663px;width:14px;height:2px;background:#111"></div>
</body></html>
